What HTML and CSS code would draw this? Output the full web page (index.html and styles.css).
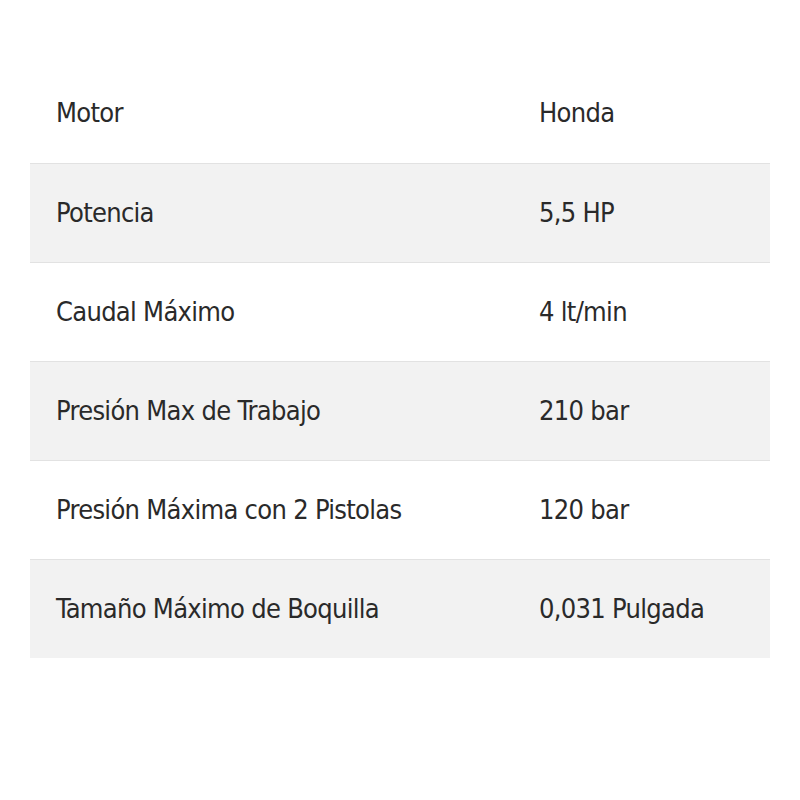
FILE: index.html
```html
<!DOCTYPE html>
<html lang="es">
<head>
<meta charset="utf-8">
<link rel="stylesheet" href="styles.css">
</head>
<body>
<div class="specs">
  <div class="row"><div class="cell">Motor</div><div class="cell">Honda</div></div>
  <div class="row alt"><div class="cell">Potencia</div><div class="cell">5,5 HP</div></div>
  <div class="row"><div class="cell">Caudal Máximo</div><div class="cell">4 lt/min</div></div>
  <div class="row alt"><div class="cell">Presión Max de Trabajo</div><div class="cell">210 bar</div></div>
  <div class="row"><div class="cell">Presión Máxima con 2 Pistolas</div><div class="cell">120 bar</div></div>
  <div class="row alt"><div class="cell">Tamaño Máximo de Boquilla</div><div class="cell">0,031 Pulgada</div></div>
</div>
</body>
</html>
```
FILE: styles.css
```css
html, body { margin: 0; padding: 0; background: #fff; }
body {
  font-family: "DejaVu Sans Condensed", "Liberation Sans", sans-serif;
  color: #2a2a2a;
  padding: 64px 30px 0 30px;
}
.specs { width: 740px; }
.row {
  display: grid;
  grid-template-columns: 483px 1fr;
  height: 99px;
  align-items: center;
  box-sizing: border-box;
}
.row + .row { border-top: 1px solid #e2e2e2; }
.row.alt { background: #f2f2f2; }
.cell {
  padding-left: 26px;
  font-size: 27px;
  letter-spacing: -0.7px;
  line-height: 1;
  padding-bottom: 2px;
}
```
